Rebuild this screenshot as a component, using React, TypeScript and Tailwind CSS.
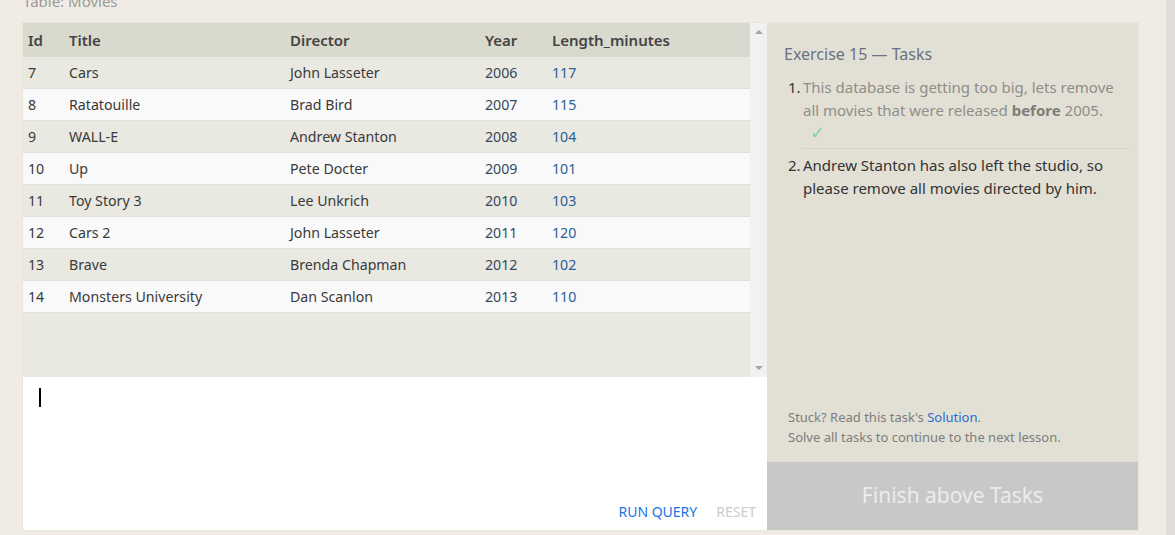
import React from "react";

const rows = [
  ["7", "Cars", "John Lasseter", "2006", "117"],
  ["8", "Ratatouille", "Brad Bird", "2007", "115"],
  ["9", "WALL-E", "Andrew Stanton", "2008", "104"],
  ["10", "Up", "Pete Docter", "2009", "101"],
  ["11", "Toy Story 3", "Lee Unkrich", "2010", "103"],
  ["12", "Cars 2", "John Lasseter", "2011", "120"],
  ["13", "Brave", "Brenda Chapman", "2012", "102"],
  ["14", "Monsters University", "Dan Scanlon", "2013", "110"],
];

const font = { fontFamily: '"Noto Sans", "Open Sans", sans-serif' };

export default function App() {
  return (
    <div
      className="min-h-screen h-[535px] bg-[#f0ece5] flex overflow-hidden"
      style={font}
    >
      <div className="flex-1 pl-[22px] pr-[27px] flex flex-col">
        <div className="h-[22px] -mt-[10px] text-[15px] leading-[22px] text-[#9b9b9b] pl-[1px]">
          Table: Movies
        </div>
        <div className="mt-[10px] flex border border-[#e6e8d8] w-[1117px]">
          {/* left */}
          <div className="w-[744px] flex flex-col">
            <div className="h-[354px] flex">
              <div className="flex-1 bg-[#e9e8e1] flex flex-col">
                <div className="h-[34px] bg-[#dad9cd] grid grid-cols-[41px_221px_195px_67px_1fr] pl-[5px] items-center text-[15px] font-semibold text-[#444]">
                  <div>Id</div>
                  <div>Title</div>
                  <div>Director</div>
                  <div>Year</div>
                  <div>Length_minutes</div>
                </div>
                {rows.map((r, i) => (
                  <div
                    key={r[0]}
                    className={
                      "h-[32px] grid grid-cols-[41px_221px_195px_67px_1fr] pl-[5px] items-center text-[14.2px] text-[#3a3a3a] border-b border-[#e1e1dc] " +
                      (i % 2 === 0 ? "bg-[#e9e8e1]" : "bg-[#f9f9f9]")
                    }
                  >
                    <div>{r[0]}</div>
                    <div>{r[1]}</div>
                    <div>{r[2]}</div>
                    <div className="text-[#34495e]">{r[3]}</div>
                    <div className="text-[#2b5f95]">{r[4]}</div>
                  </div>
                ))}
              </div>
              <div className="w-[17px] bg-[#f1f1f1] flex flex-col justify-between items-center py-[7px]">
                <div className="w-0 h-0 border-l-[4px] border-r-[4px] border-b-[4px] border-l-transparent border-r-transparent border-b-[#a3a3a3]" />
                <div className="w-0 h-0 border-l-[4px] border-r-[4px] border-t-[4px] border-l-transparent border-r-transparent border-t-[#a3a3a3]" />
              </div>
            </div>
            <div className="h-[153px] bg-white relative flex flex-col justify-between">
              <div className="ml-[16px] mt-[11px] w-[2px] h-[19px] bg-black" />
              <div className="flex justify-end gap-[19px] pr-[11px] pb-[8px] text-[14px] leading-[20px]">
                <span className="text-[#1a73e8]">RUN QUERY</span>
                <span className="text-[#cccccc]">RESET</span>
              </div>
            </div>
          </div>
          {/* right */}
          <div className="flex-1 flex flex-col bg-[#e2e0d5]">
            <div className="flex-1 flex flex-col pl-[17px] pr-[8px] pt-[20px]">
              <div className="text-[16px] leading-[22px] text-[#6b7180]">
                Exercise 15 — Tasks
              </div>
              <ol className="mt-[11px] text-[15px] leading-[23px]">
                <li className="flex pl-[4px]">
                  <span className="w-[14px] text-[#333]">1.</span>
                  <div className="flex-1 text-[#8f8d87] pb-[6px] border-b border-[#d6d4c9] pl-[1px]">
                    This database is getting too big, lets remove all movies
                    that were released <b className="text-[#7f7d78]">before</b> 2005.
                    <div className="pl-[7px] text-[#86d49e] text-[18px] leading-[20px]">✓</div>
                  </div>
                </li>
                <li className="flex pl-[4px] mt-[5px]">
                  <span className="w-[14px] text-[#333]">2.</span>
                  <div className="flex-1 text-[#333] pl-[1px]">
                    Andrew Stanton has also left the studio, so please remove all
                    movies directed by him.
                  </div>
                </li>
              </ol>
              <div className="mt-auto pb-[15px] text-[13px] leading-[20px] text-[#7d7d7d] pl-[4px]">
                <div>
                  Stuck? Read this task's{" "}
                  <span className="text-[#2b6bd6]">Solution</span>.
                </div>
                <div>Solve all tasks to continue to the next lesson.</div>
              </div>
            </div>
            <div className="h-[68px] bg-[#c8c8c8] flex items-center justify-center text-[21px] text-[#ececec]">
              Finish above Tasks
            </div>
          </div>
        </div>
      </div>
      <div className="w-[9px] bg-[#e1ddd9]" />
    </div>
  );
}
